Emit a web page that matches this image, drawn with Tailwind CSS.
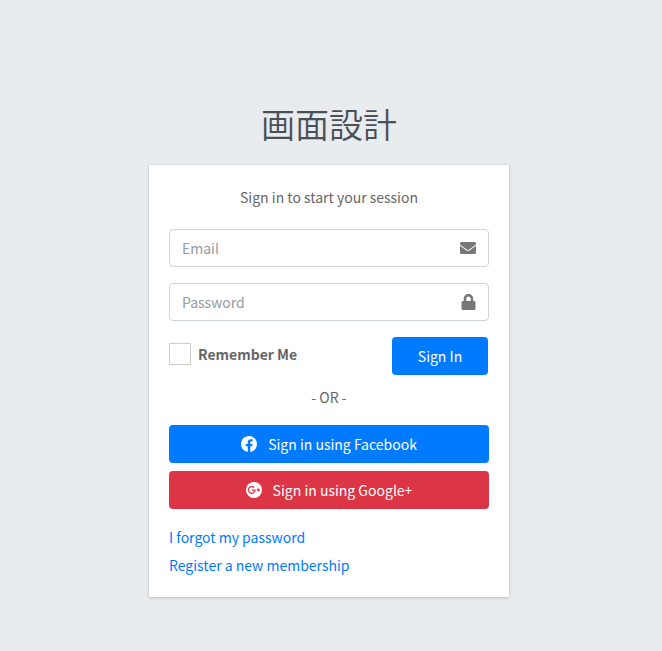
<!DOCTYPE html>
<html lang="ja">
<head>
<meta charset="utf-8">
<meta name="viewport" content="width=device-width, initial-scale=1">
<title>画面設計</title>
<script src="https://cdn.jsdelivr.net/npm/@tailwindcss/browser@4"></script>
</head>
<body class="flex min-h-screen flex-col items-center justify-center bg-[#e9ecef] pt-[46px] pr-1 font-['Noto_Sans_CJK_JP',sans-serif] text-sm/6 text-[#666666]">
  <h1 class="mb-[18px] text-[34px]/[46px] font-[350] text-[#495057]">画面設計</h1>
  <main class="w-full max-w-[360px] bg-white p-5 shadow-[0_0_1px_rgba(0,0,0,0.125),0_1px_3px_rgba(0,0,0,0.2)]">
    <p class="mb-5 text-center">Sign in to start your session</p>
    <form>
      <div class="mb-4 flex h-[38px] items-center rounded border border-[#ced4da] pr-3">
        <input type="email" aria-label="Email" placeholder="Email" class="h-full min-w-0 flex-1 pl-3 outline-none placeholder:text-[#939ba2]">
        <svg class="h-4 w-4 fill-[#777777]" viewBox="0 0 512 512" aria-hidden="true"><path d="M502.3 190.8c3.9-3.1 9.7-.2 9.7 4.7V400c0 26.5-21.5 48-48 48H48c-26.5 0-48-21.5-48-48V195.600c0-5 5.700-7.800 9.700-4.700 22.400 17.400 52.100 39.500 154.100 113.600 21.100 15.400 56.700 47.800 92.200 47.600 35.700.3 72-32.800 92.300-47.600 102-74.100 131.600-96.300 154-113.700zM256 320c23.200.4 56.600-29.200 73.400-41.400 132.700-96.300 142.800-104.700 173.400-128.700 5.800-4.500 9.200-11.500 9.200-18.900v-19c0-26.500-21.500-48-48-48H48c-26.500 0-48 21.500-48 48v19c0 7.400 3.400 14.300 9.200 18.900 30.600 23.900 40.700 32.400 173.400 128.700 16.800 12.200 50.200 41.800 73.400 41.400z"/></svg>
      </div>
      <div class="mb-4 flex h-[38px] items-center rounded border border-[#ced4da] pr-3">
        <input type="password" aria-label="Password" placeholder="Password" class="h-full min-w-0 flex-1 pl-3 outline-none placeholder:text-[#939ba2]">
        <svg class="h-4 w-[15px] fill-[#777777]" viewBox="0 0 448 512" aria-hidden="true"><path d="M400 224h-24v-72C376 68.2 307.8 0 224 0S72 68.2 72 152v72H48c-26.5 0-48 21.5-48 48v192c0 26.5 21.5 48 48 48h352c26.5 0 48-21.5 48-48V272c0-26.500-21.500-48-48-48zm-104 0H152v-72c0-39.700 32.300-72 72-72s72 32.300 72 72v72z"/></svg>
      </div>
      <div class="mb-2.5 flex h-[38px] items-center justify-between pr-px">
        <label class="mb-1 flex items-center gap-[7px] font-bold"><input type="checkbox" class="h-[22px] w-[22px] appearance-none border border-[#d3cfc8] bg-white checked:bg-[#007bff]">Remember Me</label>
        <button type="submit" class="h-full w-24 rounded bg-[#007bff] text-white">Sign In</button>
      </div>
    </form>
    <div class="mb-4 flex flex-col text-center">
      <p class="mb-4">- OR -</p>
      <a href="#" class="mb-2 flex h-[38px] items-center justify-center gap-[11px] rounded bg-[#007bff] text-white">
        <svg class="h-4 w-4 fill-white" viewBox="8 8 496 496" aria-hidden="true"><path d="M504 256C504 119 393 8 256 8S8 119 8 256c0 123.780 90.690 226.380 209.250 245V327.690h-63V256h63v-54.640c0-62.150 37-96.480 93.670-96.480 27.140 0 55.520 4.840 55.520 4.840v61h-31.280c-30.800 0-40.410 19.120-40.410 38.730V256h68.780l-11 71.690h-57.780V501C413.310 482.380 504 379.780 504 256z"/></svg>
        Sign in using Facebook
      </a>
      <a href="#" class="flex h-[38px] items-center justify-center gap-[11px] rounded bg-[#dc3545] text-white">
        <svg class="h-4 w-4" viewBox="0 8 496 496" aria-hidden="true"><circle cx="248" cy="256" r="248" fill="#fff"/><path d="M250 184a102 102 0 1 0 29 78H178M334 256h94M381 209v94" fill="none" stroke="#dc3545" stroke-width="40"/></svg>
        Sign in using Google+
      </a>
    </div>
    <nav class="flex flex-col items-start gap-1 text-[#007bff]">
      <a href="#">I forgot my password</a>
      <a href="#">Register a new membership</a>
    </nav>
  </main>
</body>
</html>
